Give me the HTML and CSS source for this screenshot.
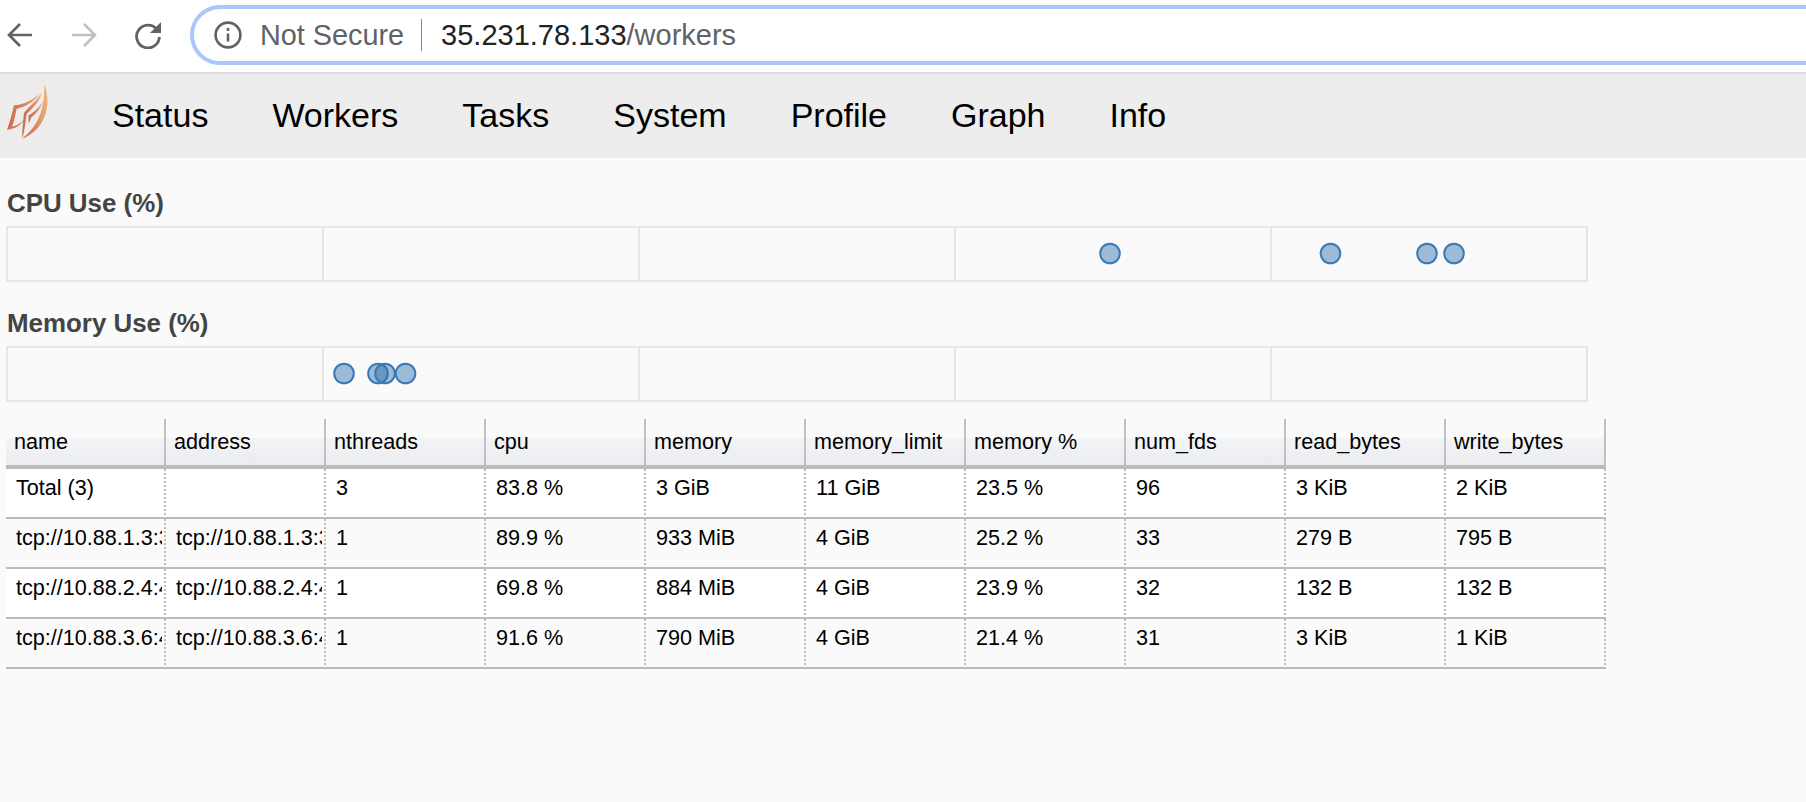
FILE: index.html
```html
<!DOCTYPE html>
<html lang="en">

<head>
  <meta charset="UTF-8">
  <title>Dask Workers</title>
  <link rel="stylesheet" href="styles.css">
</head>

<body>
  <div class="toolbar">
    <svg class="tool-icon" width="26" height="26" viewBox="0 0 26 26">
      <path d="M25 13H2M13 2L2 13l11 11" fill="none" stroke="#5f6368" stroke-width="2.6" />
    </svg>
    <svg class="tool-icon" width="26" height="26" viewBox="0 0 26 26">
      <path d="M1 13h23M13 2l11 11-11 11" fill="none" stroke="#bdc1c6" stroke-width="2.6" />
    </svg>
    <svg class="tool-icon reload" width="28" height="28" viewBox="0 0 28 28">
      <path d="M23 8.5A11.4 11.4 0 1 0 25.4 16" fill="none" stroke="#5f6368" stroke-width="2.8" />
      <path d="M27 1v11H16z" fill="#5f6368" />
    </svg>
    <div class="urlbar">
      <svg class="info-icon" width="28" height="28" viewBox="0 0 28 28">
        <circle cx="14" cy="14" r="12.4" fill="none" stroke="#5f6368" stroke-width="2.6" />
        <path d="M14 12.5v8M14 7v3" fill="none" stroke="#5f6368" stroke-width="2.6" />
      </svg>
      <span class="not-secure">Not Secure</span>
      <span class="url"><b>35.231.78.133</b>/workers</span>
    </div>
  </div>

  <nav class="nav">
    <svg class="logo" width="70" height="80" viewBox="0 0 210 240">
      <defs>
        <linearGradient id="flame" x1="0" y1="0" x2="1" y2="0">
          <stop offset="0" stop-color="#cf6a4a" />
          <stop offset="0.5" stop-color="#d98560" />
          <stop offset="1" stop-color="#ebb27c" />
        </linearGradient>
      </defs>
      <g fill="url(#flame)">
        <path d="M133 43C158 110 132 182 67 206C112 170 136 120 133 43Z" />
        <path d="M67 206C66 180 70 150 72 128C85 112 108 95 127 66C116 100 92 120 80 132C76 155 75 180 67 206Z" />
        <path d="M86 160C86 150 85 142 86 136C100 128 118 112 130 92C122 118 104 134 94 142C92 148 90 154 86 160Z" />
        <path d="M21 179C30 155 36 130 42 106C70 104 100 90 121 68C100 100 70 112 50 116C46 135 42 155 36 170C50 168 62 160 72 148C64 165 45 178 21 179Z" />
      </g>
    </svg>
    <a class="nav-link">Status</a>
    <a class="nav-link">Workers</a>
    <a class="nav-link">Tasks</a>
    <a class="nav-link">System</a>
    <a class="nav-link">Profile</a>
    <a class="nav-link">Graph</a>
    <a class="nav-link">Info</a>
  </nav>

  <main class="content">
    <h2 class="plot-title">CPU Use (%)</h2>
    <svg class="plot" width="1582" height="56" viewBox="0 0 1582 56">
      <path class="plot-grid" d="M1 1H1581V55H1ZM317 1V55M633 1V55M949 1V55M1265 1V55" />
      <circle class="dot" cx="1104" cy="27.5" r="9.8" />
      <circle class="dot" cx="1324.5" cy="27.5" r="9.8" />
      <circle class="dot" cx="1421" cy="27.5" r="9.8" />
      <circle class="dot" cx="1448" cy="27.5" r="9.8" />
    </svg>

    <h2 class="plot-title plot-title-next">Memory Use (%)</h2>
    <svg class="plot" width="1582" height="56" viewBox="0 0 1582 56">
      <path class="plot-grid" d="M1 1H1581V55H1ZM317 1V55M633 1V55M949 1V55M1265 1V55" />
      <circle class="dot" cx="338" cy="27.5" r="9.8" />
      <circle class="dot" cx="372" cy="27.5" r="9.8" />
      <circle class="dot" cx="379" cy="27.5" r="9.8" />
      <circle class="dot" cx="399.5" cy="27.5" r="9.8" />
    </svg>

    <table class="grid">
      <thead>
        <tr>
          <th>name</th>
          <th>address</th>
          <th>nthreads</th>
          <th>cpu</th>
          <th>memory</th>
          <th>memory_limit</th>
          <th>memory %</th>
          <th>num_fds</th>
          <th>read_bytes</th>
          <th>write_bytes</th>
        </tr>
      </thead>
      <tbody>
        <tr>
          <td>Total (3)</td>
          <td></td>
          <td>3</td>
          <td>83.8 %</td>
          <td>3 GiB</td>
          <td>11 GiB</td>
          <td>23.5 %</td>
          <td>96</td>
          <td>3 KiB</td>
          <td>2 KiB</td>
        </tr>
        <tr>
          <td><span class="cell-clip">tcp://10.88.1.3:37001</span></td>
          <td><span class="cell-clip">tcp://10.88.1.3:37001</span></td>
          <td>1</td>
          <td>89.9 %</td>
          <td>933 MiB</td>
          <td>4 GiB</td>
          <td>25.2 %</td>
          <td>33</td>
          <td>279 B</td>
          <td>795 B</td>
        </tr>
        <tr>
          <td><span class="cell-clip">tcp://10.88.2.4:41231</span></td>
          <td><span class="cell-clip">tcp://10.88.2.4:41231</span></td>
          <td>1</td>
          <td>69.8 %</td>
          <td>884 MiB</td>
          <td>4 GiB</td>
          <td>23.9 %</td>
          <td>32</td>
          <td>132 B</td>
          <td>132 B</td>
        </tr>
        <tr>
          <td><span class="cell-clip">tcp://10.88.3.6:41875</span></td>
          <td><span class="cell-clip">tcp://10.88.3.6:41875</span></td>
          <td>1</td>
          <td>91.6 %</td>
          <td>790 MiB</td>
          <td>4 GiB</td>
          <td>21.4 %</td>
          <td>31</td>
          <td>3 KiB</td>
          <td>1 KiB</td>
        </tr>
      </tbody>
    </table>
  </main>
</body>

</html>
```

FILE: styles.css
```css
* {
  box-sizing: border-box;
}

html,
body {
  height: 100%;
}

body {
  margin: 0;
  overflow: hidden;
  background: #fafafa;
  font-family: "Liberation Sans", Arial, sans-serif;
  color: #000;
}

.toolbar {
  display: flex;
  align-items: center;
  height: 74px;
  padding: 0 0 2px 7px;
  gap: 38px;
  background: #fff;
  border-bottom: 2px solid #dcdce0;
  overflow: hidden;
}

.tool-icon {
  flex: none;
}

.reload {
  margin-left: -1px;
}

.urlbar {
  display: flex;
  align-items: center;
  flex: none;
  width: 1700px;
  height: 60px;
  margin-left: -10px;
  padding-left: 20px;
  border: 4px solid #a8c7fa;
  border-radius: 30px;
  background: #fff;
}

.info-icon {
  flex: none;
}

.not-secure {
  margin-left: 18px;
  padding-right: 17px;
  border-right: 1.5px solid #888;
  font-size: 28.8px;
  line-height: 32px;
  color: #5f6368;
}

.url {
  margin-left: 19px;
  font-size: 29px;
  color: #5f6368;
}

.url b {
  font-weight: normal;
  color: #222;
}

.nav {
  display: flex;
  align-items: center;
  height: 84px;
  padding-bottom: 2px;
  background: #ededed;
}

.logo {
  flex: none;
  align-self: flex-start;
  margin-top: -4px;
  margin-right: 42px;
}

.nav-link {
  margin-right: 64px;
  font-size: 34px;
}

.content {
  padding: 3px 0 0 6px;
}

.plot-title {
  margin: 0;
  padding: 27px 0 0 1px;
  height: 65px;
  font-size: 25.9px;
  line-height: 30px;
  color: #444;
}

.plot-title-next {
  padding-top: 26px;
  height: 64px;
}

.plot {
  display: block;
}

.plot-grid {
  fill: none;
  stroke: #e6e6e6;
  stroke-width: 2;
}

.dot {
  fill: #2a6eae;
  fill-opacity: 0.45;
  stroke: #3a79b5;
  stroke-width: 2;
}

.grid {
  width: 1600px;
  margin-top: 17px;
  table-layout: fixed;
  border-collapse: separate;
  border-spacing: 0;
  font-size: 21.6px;
}

.grid th {
  height: 50px;
  padding: 0 0 0 8px;
  overflow: hidden;
  text-align: left;
  font-weight: normal;
  white-space: nowrap;
  background: linear-gradient(#fafafa 0, #fafafa 40%, #f3f4f6 42%, #ebecef 100%);
  border-right: 2px solid #c0c0c0;
  border-bottom: 4px solid #bbb;
}

.grid td {
  height: 50px;
  padding: 5px 0 0 10px;
  overflow: hidden;
  vertical-align: top;
  white-space: nowrap;
  line-height: 28px;
  background: #fafafa;
  border-right: 2px dotted #bbb;
  border-bottom: 2px solid #bbb;
}

.grid tbody tr:nth-child(odd) td {
  background: #fff;
}

.cell-clip {
  display: block;
  overflow: hidden;
  margin-right: 2px;
}
```
